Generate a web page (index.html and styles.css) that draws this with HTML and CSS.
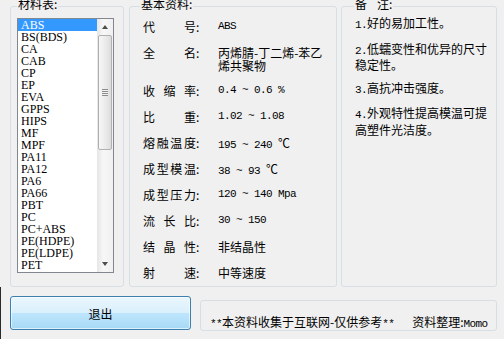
FILE: index.html
```html
<!DOCTYPE html>
<html lang="zh-CN">
<head>
    <meta charset="UTF-8">
    <title>塑料资料</title>
    <link rel="stylesheet" href="styles.css">
</head>
<body>
    <div class="window">
        <div class="panels">
            <div class="group group-list">
                <div class="group-title">材料表:</div>
                <div class="listbox">
                    <ul class="items">
                        <li class="selected">ABS</li>
                        <li>BS(BDS)</li>
                        <li>CA</li>
                        <li>CAB</li>
                        <li>CP</li>
                        <li>EP</li>
                        <li>EVA</li>
                        <li>GPPS</li>
                        <li>HIPS</li>
                        <li>MF</li>
                        <li>MPF</li>
                        <li>PA11</li>
                        <li>PA12</li>
                        <li>PA6</li>
                        <li>PA66</li>
                        <li>PBT</li>
                        <li>PC</li>
                        <li>PC+ABS</li>
                        <li>PE(HDPE)</li>
                        <li>PE(LDPE)</li>
                        <li>PET</li>
                    </ul>
                    <div class="scrollbar">
                        <div class="sb-btn"><span class="arrow-up"></span></div>
                        <div class="sb-track">
                            <div class="sb-thumb"><span class="grip"></span></div>
                        </div>
                        <div class="sb-btn"><span class="arrow-down"></span></div>
                    </div>
                </div>
            </div>

            <div class="group group-info">
                <div class="group-title">基本资料:</div>
                <div class="info">
                    <div class="row"><span class="label"><span class="spread">代 号</span>:</span><span class="value num">ABS</span></div>
                    <div class="row row-tall"><span class="label"><span class="spread">全 名</span>:</span><span class="value">丙烯腈-丁二烯-苯乙烯共聚物</span></div>
                    <div class="row"><span class="label"><span class="spread">收 缩 率</span>:</span><span class="value num">0.4 ~ 0.6 %</span></div>
                    <div class="row"><span class="label"><span class="spread">比 重</span>:</span><span class="value num">1.02 ~ 1.08</span></div>
                    <div class="row"><span class="label"><span class="spread">熔融温度</span>:</span><span class="value"><span class="num">195 ~ 240 </span>℃</span></div>
                    <div class="row"><span class="label"><span class="spread">成型模温</span>:</span><span class="value"><span class="num">38 ~ 93 </span>℃</span></div>
                    <div class="row"><span class="label"><span class="spread">成型压力</span>:</span><span class="value num">120 ~ 140 Mpa</span></div>
                    <div class="row"><span class="label"><span class="spread">流 长 比</span>:</span><span class="value num">30 ~ 150</span></div>
                    <div class="row"><span class="label"><span class="spread">结 晶 性</span>:</span><span class="value">非结晶性</span></div>
                    <div class="row"><span class="label"><span class="spread">射 速</span>:</span><span class="value">中等速度</span></div>
                </div>
            </div>

            <div class="group group-notes">
                <div class="group-title"><span class="spread note-spread">备 注</span>:</div>
                <div class="notes">
                    <p><span class="num">1.</span>好的易加工性。</p>
                    <p><span class="num">2.</span>低蠕变性和优异的尺寸稳定性。</p>
                    <p><span class="num">3.</span>高抗冲击强度。</p>
                    <p><span class="num">4.</span>外观特性提高模温可提高塑件光洁度。</p>
                </div>
            </div>
        </div>

        <div class="footer">
            <button class="btn-exit" type="button">退出</button>
            <div class="credit"><span class="num">**</span>本资料收集于互联网-仅供参考<span class="num">** &nbsp; </span>资料整理:<span class="num">Momo</span></div>
        </div>
    </div>
</body>
</html>
```

FILE: styles.css
```css
body {
    margin: 0;
    background: #f0f0f0;
    font-family: "Noto Sans CJK SC", sans-serif;
    font-size: 12px;
    color: #000;
}

.window {
    width: 504px;
    height: 339px;
    overflow: hidden;
}

.panels {
    display: flex;
    padding: 6px 0 0 10px;
}

.group {
    box-sizing: border-box;
    height: 281px;
    border: 1px solid #d5dfe5;
    border-radius: 3px;
}

.group-title {
    display: block;
    width: max-content;
    height: 13px;
    margin-top: -10px;
    padding: 0 1px;
    line-height: 13px;
    background: #f0f0f0;
}

.spread {
    display: inline-block;
    vertical-align: top;
    text-align: justify;
    text-align-last: justify;
}

/* material list */
.group-list {
    width: 114px;
    padding-left: 6px;
}

.listbox {
    display: flex;
    width: 95px;
    height: 253px;
    margin-top: 8px;
    border: 1px solid #828790;
    background: #fff;
}

.items {
    list-style: none;
    margin: 0;
    padding: 0;
    width: 79px;
    font-family: "Liberation Serif", serif;
    font-size: 12px;
}

.items li {
    height: 12px;
    line-height: 12px;
    padding-left: 3px;
    white-space: nowrap;
}

.items li.selected {
    background: #3399ff;
    color: #fff;
}

.scrollbar {
    display: flex;
    flex-direction: column;
    width: 16px;
    background: linear-gradient(to right, #e6e6e6, #f7f7f7 40%, #f0f0f0);
}

.sb-btn {
    height: 16px;
    display: flex;
    align-items: center;
    justify-content: center;
}

.arrow-up,
.arrow-down {
    width: 0;
    height: 0;
    border-left: 3px solid transparent;
    border-right: 3px solid transparent;
}

.arrow-up {
    border-bottom: 4px solid #4d4d4d;
}

.arrow-down {
    border-top: 4px solid #4d4d4d;
}

.sb-track {
    flex: 1;
}

.sb-thumb {
    box-sizing: border-box;
    height: 115px;
    margin: 0 1px;
    border: 1px solid #b0b0b0;
    border-radius: 2px;
    background: linear-gradient(to right, #f7f7f7, #e9e9e9 60%, #dcdcdc);
    display: flex;
    align-items: center;
    justify-content: center;
}

.grip {
    width: 6px;
    height: 7px;
    background: repeating-linear-gradient(to bottom, #8c8c8c 0, #8c8c8c 1px, #f2f2f2 1px, #f2f2f2 2px);
}

/* basic info */
.group-info {
    width: 208px;
    margin-left: 5px;
    padding-left: 13px;
}

.group-info .group-title {
    margin-left: -3px;
}

.info {
    margin-top: 10px;
}

.row {
    display: flex;
    height: 13px;
    margin-bottom: 13px;
    line-height: 13px;
}

.row-tall {
    height: 26px;
    margin-bottom: 12px;
}

.label {
    flex: none;
    width: 75px;
}

.label .spread {
    width: 53px;
}

.value {
    width: 112px;
}

.num {
    font-family: "Liberation Mono", monospace;
    font-size: 11px;
    letter-spacing: -0.6px;
}

/* notes */
.group-notes {
    width: 156px;
    margin-left: 4px;
    padding-left: 13px;
}

.group-notes .group-title {
    margin-left: -1px;
}

.note-spread {
    width: 34px;
}

.notes {
    width: 134px;
    margin-top: 6px;
    line-height: 13.5px;
}

.notes p {
    margin: 0 0 9px;
}

/* bottom bar */
.footer {
    display: flex;
    align-items: flex-start;
    height: 52px;
    padding: 9px 0 0 9px;
    border-left: 1px solid #2a2a2a;
}

.btn-exit {
    width: 181px;
    height: 34px;
    border: 1px solid #3c7fb1;
    border-radius: 3px;
    background: linear-gradient(#eaf6fd, #d9f0fc 50%, #bee6fd 50%, #a7d9f5);
    box-shadow: inset 0 0 0 1px rgba(255, 255, 255, 0.6);
    font-family: "Noto Sans CJK SC", sans-serif;
    font-size: 12px;
    color: #000;
    padding: 0;
}

.credit {
    box-sizing: border-box;
    width: 297px;
    height: 31px;
    margin: 4px 0 0 9px;
    padding: 14px 0 0 9px;
    border: 1px solid #d5dfe5;
    border-radius: 3px;
    line-height: 13px;
    white-space: nowrap;
}
```
